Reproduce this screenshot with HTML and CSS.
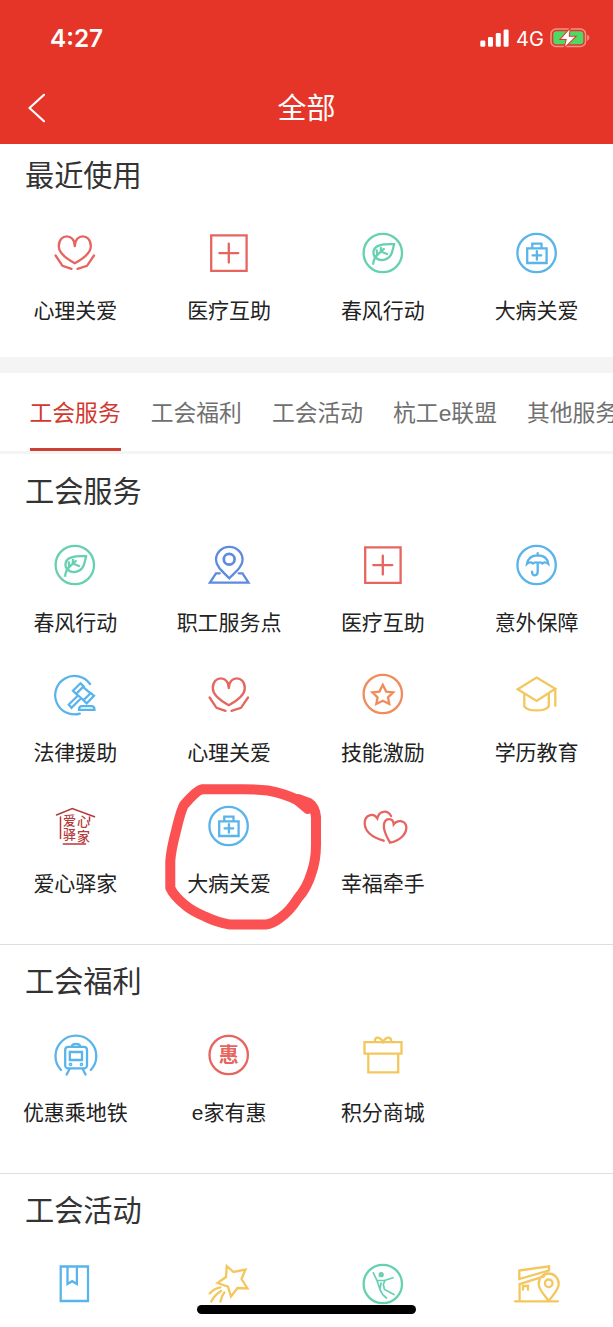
FILE: index.html
```html
<!DOCTYPE html>
<html lang="zh-CN">
<head>
<meta charset="utf-8">
<title>全部</title>
<link rel="stylesheet" href="styles.css">
</head>
<body>
<svg class="sprite" aria-hidden="true">
  <symbol id="heart" viewBox="0 0 48 48"><path d="M23.800 17.200C23.800 4 7.800 4 7.800 17.300C7.800 24.500 15 29.500 23.800 34.200C32.600 29.500 39.800 24.500 39.800 17.300C39.800 4 23.800 4 23.800 17.200M4.600 26.500L11.500 36.800L20.500 39.800M43 26.500L36 36.800L26.500 39.800"/></symbol>
  <symbol id="medical" viewBox="0 0 48 48"><path d="M6.2 6.400H41.600V41.800H6.200ZM14.300 24.100H33.300M23.800 14.600V33.600"/></symbol>
  <symbol id="leaf" viewBox="0 0 48 48"><circle cx="23.800" cy="24" r="19.200"/><path d="M14.200 34.800C14.500 31 16 28 18.400 25.800L24.800 20M35.200 15.200C29 15 24 15 20.500 16.400C13.500 18.500 13 25.500 17 29C22 33 30 31 32.600 24.500C34 21 34 19 35.200 15.200M22 18.800L21.800 22.600M22.500 22.800L28 25M17.800 21.500L18.200 26"/></symbol>
  <symbol id="kit" viewBox="0 0 48 48"><circle cx="23.600" cy="24" r="19.200"/><path d="M14.200 19.400H33.600V34H14.200ZM19.300 19.400V14.700H28.500V19.400M19.600 26.400H28.200M23.900 22.100V30.700"/></symbol>
</svg>
<div class="screen">
  <header class="header">
    <div class="status">
      <span class="time">4:27</span>
      <div class="signals">
        <svg width="29" height="18" viewBox="0 0 29 18" fill="#fff"><rect x="0.300" y="11.500" width="5" height="6.300" rx="1.300"/><rect x="8" y="8" width="5" height="9.800" rx="1.300"/><rect x="15.800" y="4" width="5" height="13.800" rx="1.300"/><rect x="23.600" y="0.500" width="5" height="17.300" rx="1.300"/></svg>
        <span class="network">4G</span>
        <svg class="battery" width="40" height="20" viewBox="0 0 40 20"><rect x="1" y="1" width="34.500" height="17.500" rx="5" fill="none" stroke="#f49389" stroke-width="1.500"/><rect x="3.300" y="3.300" width="30" height="13" rx="3" fill="#4dd964"/><path d="M37.200 6.800C40 8 40 11.600 37.200 12.800Z" fill="#f49389"/><path d="M19.500 1.500L11 11H16.800L15 18.500L25 8.700H18.700Z" fill="#fff" stroke="#e5352a" stroke-width="2" paint-order="stroke"/></svg>
      </div>
    </div>
    <div class="navbar">
      <svg class="back" width="18" height="30" viewBox="0 0 18 30"><path d="M17 1.800L2.500 15L17 28.200"/></svg>
      <h1>全部</h1>
    </div>
  </header>

  <section class="recent">
    <h2>最近使用</h2>
    <div class="grid">
      <div class="item red"><svg class="icon"><use href="#heart"/></svg><span>心理关爱</span></div>
      <div class="item red"><svg class="icon"><use href="#medical"/></svg><span>医疗互助</span></div>
      <div class="item green"><svg class="icon"><use href="#leaf"/></svg><span>春风行动</span></div>
      <div class="item blue"><svg class="icon"><use href="#kit"/></svg><span>大病关爱</span></div>
    </div>
  </section>

  <nav class="tabs">
    <span class="tab active">工会服务</span><span class="tab">工会福利</span><span class="tab">工会活动</span><span class="tab">杭工e联盟</span><span class="tab">其他服务</span>
  </nav>

  <section class="services">
    <h2>工会服务</h2>
    <div class="grid">
      <div class="item green"><svg class="icon"><use href="#leaf"/></svg><span>春风行动</span></div>
      <div class="item indigo"><svg class="icon" viewBox="0 0 48 48"><path d="M24.300 37.300C18 31 11 25.500 11 18.700A13.300 12.900 0 0 1 37.600 18.700C37.600 25.500 30.500 31 24.300 37.300ZM14.800 32.300H11L4.900 41.600H43.500L37.500 32.300H33.700"/><circle cx="24.200" cy="18.300" r="5.400" stroke-width="2.700"/></svg><span>职工服务点</span></div>
      <div class="item red"><svg class="icon"><use href="#medical"/></svg><span>医疗互助</span></div>
      <div class="item blue"><svg class="icon" viewBox="0 0 48 48"><circle cx="23.600" cy="24" r="19.200"/><path d="M14 22.800C15 17 19 14.300 24.700 14.300S34.500 17 35.300 22.800C33 21 31 21 29.500 22.500C27.500 21 26 21 24.700 22C23 21 21.500 21 20 22.500C18 21 16 21 14 22.800ZM24.700 12.200V14.500M24.700 22V30.500C24.700 35.500 19 35.500 19 30.700"/></svg><span>意外保障</span></div>

      <div class="item blue"><svg class="icon" viewBox="0 0 48 48"><path d="M39 13A19.200 19.200 0 1 0 28.800 42.600M29.500 12.300L32.600 15.200L25.200 22.800L22 19.800ZM39.800 22L43 24.900L35.700 32.300L32.500 29.300ZM32 15.800L39.500 22.300M25.500 23L32.400 29M26.500 25L17.800 33.500L20.500 36.800L29.800 27.500M28 38.800C28 36 29 35.200 31 35.200H40.500C42.500 35.200 43.500 36 43.500 38.800Z"/></svg><span>法律援助</span></div>
      <div class="item red"><svg class="icon"><use href="#heart"/></svg><span>心理关爱</span></div>
      <div class="item orange"><svg class="icon" viewBox="0 0 48 48"><circle cx="23.800" cy="23" r="19.200"/><path d="M23.800 13.800L27.200 20.600L34.200 21.400L29 26.300L30.300 33L23.800 29.800L17.300 33L18.600 26.300L13.400 21.400L20.400 20.600Z"/></svg><span>技能激励</span></div>
      <div class="item yellow"><svg class="icon" viewBox="0 0 48 48"><path d="M23.600 6.600L42.300 17.800L23.600 30L4.700 18.200ZM42.300 17.800V34.800M11.300 23.300V35.300C15 40.800 32 40.800 35.800 35.300V23.300"/></svg><span>学历教育</span></div>

      <div class="item maroon"><svg class="icon" viewBox="0 0 48 48"><path d="M5.500 13L21.300 6.500L43.500 14.800M9.500 15V36.500M12.300 42H34.500M38.500 15V19" stroke-width="1.500"/><text x="12" y="22.800">爱</text><text x="26" y="24">心</text><text x="12" y="37.200">驿</text><text x="26" y="39.200">家</text></svg><span>爱心驿家</span></div>
      <div class="item blue"><svg class="icon"><use href="#kit"/></svg><span>大病关爱</span></div>
      <div class="item red"><svg class="icon" viewBox="0 0 48 48"><path d="M24.700 38.700C12 35 6 28.500 5.700 21.500C5.500 12.500 14.500 10.500 18.300 16.300C20 8.500 28.500 7.500 32 14M31 40.700C26.500 33 24 27.500 25 22C26.500 15.500 34 15.500 34.700 22.300C38 17.500 46 18 47.300 24.500C48 31 42 38.500 31 40.700Z"/></svg><span>幸福牵手</span></div>
    </div>
  </section>

  <section class="benefits">
    <h2>工会福利</h2>
    <div class="grid">
      <div class="item blue"><svg class="icon" viewBox="0 0 48 48"><path d="M10 39A20.400 20.400 0 1 1 39.800 39M20.800 15.700C20.800 11.800 29.200 11.800 29.200 15.700M18.800 21H31V29H18.800ZM18.500 38L15.700 43.500M31.700 38L34.500 43.500"/><rect x="14.200" y="15.800" width="21.800" height="21.600" rx="3"/><circle cx="19.500" cy="33.300" r=".7"/><circle cx="30.500" cy="33.300" r=".7"/></svg><span>优惠乘地铁</span></div>
      <div class="item red"><svg class="icon" viewBox="0 0 48 48"><circle cx="23.700" cy="24" r="19.200"/><text class="hui" x="23.700" y="31.300">惠</text></svg><span>e家有惠</span></div>
      <div class="item yellow"><svg class="icon" viewBox="0 0 48 48"><path d="M5.500 11.200H42.500V22.600H5.500ZM9.300 22.600H39.200V41.400H9.300ZM15.800 11C15.500 4.500 21.500 6 24 11C26.500 6 32.500 4.500 32.200 11"/></svg><span>积分商城</span></div>
    </div>
  </section>

  <section class="activities">
    <h2>工会活动</h2>
    <div class="grid">
      <div class="item blue"><svg class="icon" viewBox="0 0 48 48"><path d="M9.700 6.500H37V41H9.700ZM16.500 6.500V24L21.200 21.200L25.900 24V6.500"/></svg></div>
      <div class="item yellow"><svg class="icon" viewBox="0 0 48 48"><path d="M21.800 6L28.500 12L40.500 9.500L36.500 19L42.500 28.500L32.500 28L26 36.500L23 26.700L12.500 23L21 17ZM15.300 27.300Q9 28.500 4.700 33.500M16 31Q10 34.500 6.300 41.500M19.300 32.500Q16.500 36 15.500 41.500"/></svg></div>
      <div class="item green"><svg class="icon" viewBox="0 0 48 48"><circle cx="23.800" cy="24" r="19.200"/><circle cx="22.200" cy="14.700" r="1.500" fill="currentColor"/><path d="M14.300 12.800L18 20.500L21 29.500Q23 35 27.500 38M18 20.500H25.500L34 17.700M26 20.500L24.300 24.500L25.500 29.500L35 34.500M21 29.500L22 23" stroke-width="1.700"/></svg></div>
      <div class="item yellow"><svg class="icon" viewBox="0 0 48 48"><path d="M6.300 10.500L36 6.400V10.500L6.300 19ZM6.600 41V24.200L31 16.300M2 41.300H45M10 29.700V26H15V29.700M35.700 41C31 34.500 25.700 29.500 25.700 24A10 10.500 0 0 1 45.700 24C45.700 29.500 40.500 34.500 35.700 41Z"/><circle cx="35.700" cy="23.300" r="3.800"/></svg></div>
    </div>
  </section>

  <svg class="annotation" width="170" height="160" viewBox="155 775 170 160"><path d="M307.700 809L297 800Q286 794 268 790.500Q256 789 238 789.300H202Q196 791 184 805Q181 810 176 831Q171 850 170.300 861V888Q174 896 185 905Q192 911 205 916.500Q216 922 230 924.600H266Q272 924 280 918Q290 911 298 898Q307 888 311.500 873Q316 860 316 845V817Q315 807 309 803L298 799"/></svg>
  <div class="home-bar"></div>
</div>
</body>
</html>
```
FILE: styles.css
```css
* { box-sizing: border-box; }
body { margin: 0; background: #fff; font-family: "Liberation Sans", "Noto Sans CJK SC", sans-serif; color: #222; }
.sprite { display: none; }
.screen { position: relative; width: 613px; height: 1327px; overflow: hidden; }

.header { height: 144px; background: #e53529; color: #fff; }
.status { display: flex; justify-content: space-between; align-items: center; height: 76px; padding: 0 23px 0 50px; }
.time { font: 600 24.300px/30px Inter, sans-serif; }
.signals { display: flex; align-items: center; }
.network { width: 27px; margin: 2px 7px 0; font: 400 20px/22px Inter, sans-serif; text-align: center; }
.navbar { display: grid; grid-template-columns: 60px 1fr 60px; align-items: center; height: 64px; }
.back { margin-left: 27px; fill: none; stroke: #fff; stroke-width: 2.2; stroke-linecap: round; stroke-linejoin: round; }
h1 { margin: 0; padding-top: 2px; font-size: 29px; font-weight: 400; line-height: 40px; text-align: center; }

h2 { margin: 0; padding-left: 25px; font-size: 29.200px; font-weight: 400; line-height: 42px; color: #333; }
.grid { display: grid; grid-template-columns: repeat(4, 1fr); row-gap: 34.600px; margin: 0 -0.500px 0 -1.500px; }
.item { display: flex; flex-direction: column; align-items: center; gap: 20px; }
.item span { font-size: 21px; line-height: 28px; color: #222; white-space: nowrap; }
.icon { display: block; width: 48px; height: 48px; overflow: visible; fill: none; stroke: currentColor; stroke-width: 2.3; stroke-linecap: round; }
.icon text { fill: currentColor; stroke: none; font: 700 13px "Noto Sans CJK SC", sans-serif; }
.maroon .icon text { font-weight: 500; }
.icon .hui { font-size: 20px; text-anchor: middle; }

.red { color: #e66560; }
.green { color: #65d1b1; }
.blue { color: #5ab4ec; }
.indigo { color: #5e8ae0; }
.orange { color: #f08c5c; }
.yellow { color: #f4c75e; }
.maroon { color: #b53a3c; }

.recent { height: 229px; padding-top: 11px; border-bottom: 16px solid #f4f4f4; }
.recent .grid { padding-top: 31.500px; }
.tabs { display: flex; gap: 30px; height: 81px; padding-left: 29.500px; border-bottom: 3px solid #f4f4f4; overflow: hidden; font-size: 22.800px; line-height: 80px; color: #707070; }
.tab { flex: none; height: 78px; }
.tab.active { color: #d1392f; border-bottom: 3px solid #cd4034; }
.services { height: 491px; padding-top: 17px; border-bottom: 1px solid #dedede; }
.services .grid { padding-top: 27.500px; }
.benefits .grid, .activities .grid { padding-top: 28px; }
.benefits { height: 229px; padding-top: 16px; border-bottom: 1px solid #dedede; }
.activities { padding-top: 16px; }

.annotation { position: absolute; left: 155px; top: 775px; fill: none; stroke: #fb5152; stroke-width: 10; stroke-linecap: round; stroke-linejoin: round; }
.home-bar { position: absolute; left: 197px; top: 1305px; width: 219px; height: 9px; border-radius: 5px; background: #000; }
```
